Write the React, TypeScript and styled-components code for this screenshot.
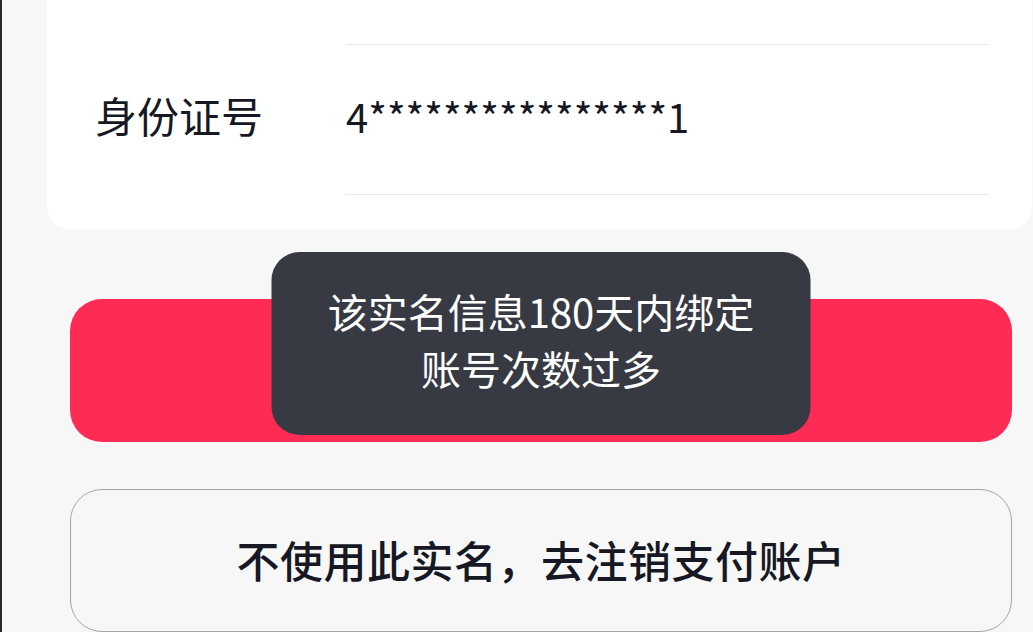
import React from "react";
import styled, { createGlobalStyle } from "styled-components";

const GlobalStyle = createGlobalStyle`
  html, body {
    margin: 0;
    padding: 0;
    background: #f7f7f7;
    overflow: hidden;
  }
  body {
    font-family: "Noto Sans CJK SC", "Noto Sans", sans-serif;
    color: #161823;
  }
`;

const Page = styled.div`
  width: 1033px;
  height: 632px;
  box-sizing: border-box;
  border-left: 2px solid #2b2b2b;
  background: #f7f7f7;
  overflow: hidden;
`;

const Card = styled.section`
  margin: 0 1px 0 45px;
  padding: 0 43px 34px 48px;
  background: #ffffff;
  border-radius: 0 0 22px 22px;
`;

const Row = styled.div`
  display: flex;
  align-items: stretch;
`;

const Label = styled.div`
  width: 251px;
  flex: none;
  display: flex;
  align-items: center;
  padding-bottom: 10px;
  font-size: 42px;
  line-height: 1;
  color: #161823;
`;

const Value = styled.div<{ $h: number }>`
  flex: 1;
  height: ${(p) => p.$h}px;
  box-sizing: border-box;
  border-bottom: 1px solid #e8e8e8;
  display: flex;
  align-items: center;
  font-size: 40px;
  line-height: 1;
  color: #161823;
  padding-bottom: 8px;
`;

const Actions = styled.div`
  position: relative;
  margin: 70px 21px 0 68px;
  display: flex;
  flex-direction: column;
  gap: 47px;
`;

const PrimaryButton = styled.button`
  height: 143px;
  border: none;
  border-radius: 32px;
  background: #fe2c55;
  color: #ffffff;
  font-family: inherit;
  font-size: 42px;
`;

const OutlineButton = styled.button`
  height: 143px;
  box-sizing: border-box;
  border: 1.5px solid #a6a6a6;
  border-radius: 32px;
  background: #f7f7f7;
  color: #161823;
  font-family: inherit;
  font-size: 43px;
  font-weight: 500;
  letter-spacing: 0.5px;
  padding-bottom: 4px;
`;

const Toast = styled.div`
  position: absolute;
  top: -47px;
  left: 50%;
  transform: translateX(-50%);
  width: 539px;
  box-sizing: border-box;
  padding: 31px 0 38px;
  border-radius: 28px;
  background: #383a43;
  color: #ffffff;
  font-size: 40px;
  line-height: 57px;
  text-align: center;
`;

export default function App() {
  return (
    <>
      <GlobalStyle />
      <Page>
        <Card>
          <Row>
            <Label />
            <Value $h={45} />
          </Row>
          <Row>
            <Label>身份证号</Label>
            <Value $h={150}>4****************1</Value>
          </Row>
        </Card>
        <Actions>
          <PrimaryButton aria-label="确认" />
          <OutlineButton>不使用此实名，去注销支付账户</OutlineButton>
          <Toast>
            该实名信息180天内绑定
            <br />
            账号次数过多
          </Toast>
        </Actions>
      </Page>
    </>
  );
}
